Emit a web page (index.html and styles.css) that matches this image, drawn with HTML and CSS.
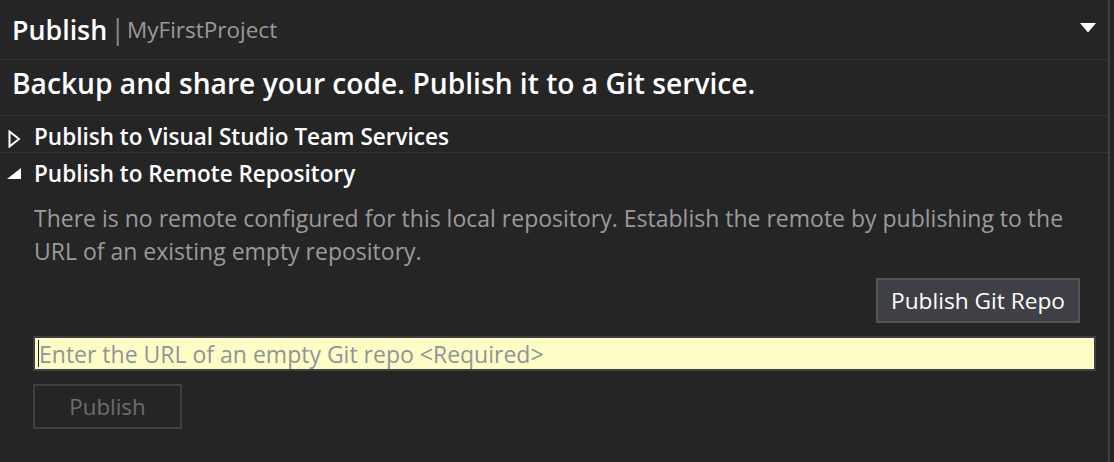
FILE: index.html
```html
<!DOCTYPE html>
<html>
<head>
<meta charset="utf-8">
<link rel="stylesheet" href="styles.css">
</head>
<body>
<div class="panel">
  <div class="header">
    <span class="title">Publish</span>
    <span class="sep">|</span>
    <span class="project">MyFirstProject</span>
    <span class="spacer"></span>
    <svg class="dropdown" width="16" height="10" viewBox="0 0 16 10"><path d="M0 0 H16 L8 9.5 Z" fill="#ffffff"/></svg>
  </div>
  <div class="headline">Backup and share your code. Publish it to a Git service.</div>
  <div class="section collapsed">
    <svg class="arrow arrow-collapsed" width="13" height="18" viewBox="0 0 13 18"><path d="M1.5 1.5 L11 9 L1.5 16.5 Z" fill="none" stroke="#ffffff" stroke-width="2" stroke-linejoin="miter"/></svg>
    <span class="section-title">Publish to Visual Studio Team Services</span>
  </div>
  <div class="section expanded">
    <svg class="arrow arrow-expanded" width="14" height="11" viewBox="0 0 14 11"><path d="M14 0 V11 H0 Z" fill="#ffffff"/></svg>
    <span class="section-title">Publish to Remote Repository</span>
  </div>
  <div class="body">
    <p class="desc">There is no remote configured for this local repository. Establish the remote by publishing to the URL of an existing empty repository.</p>
    <div class="actions">
      <button class="btn">Publish Git Repo</button>
    </div>
    <div class="input"><span class="caret"></span><span class="placeholder">Enter the URL of an empty Git repo &lt;Required&gt;</span></div>
    <button class="btn-disabled">Publish</button>
  </div>
</div>
</body>
</html>
```
FILE: styles.css
```css
html, body {
  margin: 0;
  padding: 0;
  background: #252526;
  height: 100%;
  overflow: hidden;
}
body {
  font-family: "Open Sans", "Noto Sans", sans-serif;
  color: #f1f1f1;
}
.panel {
  width: 1110px;
  height: 462px;
  border-right: 2px solid #3f3f46;
  box-sizing: border-box;
}
.header {
  height: 60px;
  border-bottom: 1px solid #333337;
  display: flex;
  align-items: center;
  padding-left: 12px;
  padding-right: 12px;
  box-sizing: border-box;
}
.title {
  font-size: 26.8px;
  font-weight: 600;
  color: #ffffff;
}
.sep {
  font-size: 27px;
  color: #8a8a8a;
  margin: -2px 2px 0 3px;
}
.project {
  font-size: 22.5px;
  color: #9a9a9a;
}
.spacer { flex: 1; }
.dropdown { display: block; margin-top: -4px; }
.headline {
  height: 56px;
  border-bottom: 1px solid #333337;
  padding-left: 12px;
  padding-bottom: 10px;
  box-sizing: border-box;
  display: flex;
  align-items: center;
  font-size: 28.2px;
  font-weight: 600;
  color: #ffffff;
  white-space: nowrap;
}
.section {
  display: flex;
  align-items: center;
  box-sizing: border-box;
}
.section.collapsed {
  height: 37px;
  padding-top: 4px;
  padding-left: 8px;
  border-bottom: 1px solid #333337;
}
.section.expanded {
  height: 44px;
  padding-bottom: 3px;
  padding-left: 7px;
}
.arrow { display: block; flex: none; }
.arrow-collapsed { margin-top: 6px; margin-right: 13px; }
.arrow-expanded { margin-right: 13px; }
.section-title {
  font-size: 22.5px;
  font-weight: 600;
  color: #ffffff;
  white-space: nowrap;
}
.body {
  padding-left: 33px;
  padding-right: 12px;
}
.desc {
  margin: 5px 0 0 0;
  padding-left: 1px;
  font-size: 23px;
  line-height: 33px;
  color: #9b9b9b;
}
.actions {
  display: flex;
  justify-content: flex-end;
  margin-top: 10px;
  padding-right: 16px;
}
.btn {
  width: 204px;
  height: 45px;
  background: #3f3f46;
  border: 2px solid #54545c;
  color: #ffffff;
  font-family: inherit;
  font-size: 22.7px;
  padding: 0;
}
.input {
  margin-top: 13px;
  width: 1063px;
  height: 35px;
  box-sizing: border-box;
  border: 2px solid #3f3f46;
  background: #fffdc6;
  display: flex;
  align-items: center;
  padding-left: 3px;
}
.caret {
  width: 1px;
  height: 27px;
  background: #1e1e1e;
  flex: none;
}
.placeholder {
  font-size: 23px;
  color: #8f959a;
  white-space: nowrap;
}
.btn-disabled {
  display: block;
  margin-top: 13px;
  width: 149px;
  height: 45px;
  background: transparent;
  border: 2px solid #3f3f3f;
  color: #6d6d6d;
  font-family: inherit;
  font-size: 22.3px;
  padding: 0;
}
```
